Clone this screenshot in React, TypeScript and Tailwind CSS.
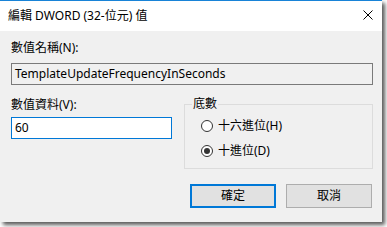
export default function App() {
  return (
    <div className="w-[387px] h-[227px] bg-white font-['Noto_Sans','Noto_Sans_CJK_TC',sans-serif] text-[12px] leading-[16px] text-black">
      <div className="w-[382px] h-[222px] flex flex-col shadow-[3px_3px_4px_rgba(0,0,0,0.65)]">
        <div className="h-[31px] bg-white border-t border-[#1883d7] flex items-start">
          <div className="mt-[7px] ml-[8px] flex-1">編輯 DWORD (32-位元) 值</div>
          <svg className="mt-[9px] mr-[9px]" width="10" height="10" viewBox="0 0 10 10">
            <path d="M0.5 0.5 L9.5 9.5 M9.5 0.5 L0.5 9.5" stroke="#000" strokeWidth="1" fill="none" />
          </svg>
        </div>
        <div className="flex-1 bg-[#f0f0f0] pl-[11px] pr-[9px] pt-[9px] flex flex-col">
          <div>數值名稱(N):</div>
          <div className="mt-[7px] h-[22px] border border-[#7a7a7a] bg-[#f0f0f0] pl-[3px] flex items-center">
            TemplateUpdateFrequencyInSeconds
          </div>
          <div className="mt-[11px] flex gap-[12px]">
            <div className="w-[161px] pt-[1px] flex flex-col">
              <div>數值資料(V):</div>
              <div className="mt-[4px] h-[22px] border border-[#0078d7] bg-white pl-[3px] flex items-center">60</div>
            </div>
            <fieldset className="flex-1 border border-[#dcdcdc] px-0 pb-[7px] m-0 min-w-0">
              <legend className="ml-[7px] px-[1px]">底數</legend>
              <div className="pl-[16px] pt-[4px] flex flex-col gap-[5px]">
                <label className="h-[20px] flex items-center gap-[5px]">
                  <span className="w-[12px] h-[12px] rounded-full border border-[#333] bg-white" />
                  <span>十六進位(H)</span>
                </label>
                <label className="h-[20px] flex items-center gap-[5px]">
                  <span className="w-[12px] h-[12px] rounded-full border border-[#333] bg-white flex items-center justify-center">
                    <span className="w-[6px] h-[6px] rounded-full bg-[#333]" />
                  </span>
                  <span>十進位(D)</span>
                </label>
              </div>
            </fieldset>
          </div>
          <div className="mt-[15px] pr-[1px] flex justify-end gap-[10px]">
            <button className="w-[86px] h-[24px] border-2 border-[#0078d7] bg-[#e1e1e1] flex items-center justify-center">確定</button>
            <button className="w-[86px] h-[24px] border border-[#adadad] bg-[#e1e1e1] flex items-center justify-center">取消</button>
          </div>
        </div>
      </div>
    </div>
  );
}
